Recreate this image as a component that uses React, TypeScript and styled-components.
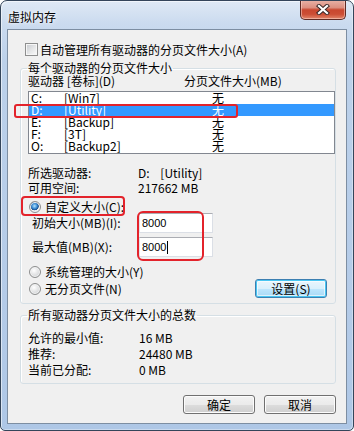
import React from "react";
import styled, { createGlobalStyle } from "styled-components";

const GlobalStyle = createGlobalStyle`
  html, body {
    margin: 0;
    padding: 0;
    background: #fff;
  }
  body {
    font-family: "Noto Sans CJK SC", "Noto Sans", sans-serif;
    font-size: 12px;
    color: #000;
  }
`;

const Window = styled.div`
  position: relative;
  box-sizing: border-box;
  width: 354px;
  height: 431px;
  border: 1px solid #34455a;
  border-radius: 7px 7px 5px 5px;
  padding: 0 6px 6px 6px;
  display: flex;
  flex-direction: column;
  background: linear-gradient(
    180deg,
    #dfe9f5 0px,
    #cbdbef 22px,
    #bcd1ea 60px,
    #b4cbe8 300px,
    #aec7e6 100%
  );
  box-shadow: inset 1px 1px 0 rgba(255, 255, 255, 0.55),
    inset -1px -1px 0 rgba(255, 255, 255, 0.35);
  overflow: hidden;
`;

const TitleBar = styled.div`
  height: 28px;
  display: flex;
  align-items: flex-start;
  justify-content: space-between;
  flex-shrink: 0;
`;

const Title = styled.div`
  margin: 10px 0 0 1px;
  line-height: 12px;
  text-shadow: 0 0 6px rgba(255, 255, 255, 0.9), 0 0 3px rgba(255, 255, 255, 0.9);
`;

const CloseButton = styled.div`
  box-sizing: border-box;
  width: 46px;
  height: 20px;
  margin: -1px 1px 0 0;
  border: 1px solid #5e2a24;
  border-top: none;
  border-radius: 0 0 5px 5px;
  background: linear-gradient(
    180deg,
    #e9b3a8 0%,
    #dc8f80 40%,
    #c9472f 52%,
    #cc4e35 75%,
    #e2866b 100%
  );
  box-shadow: inset 0 0 0 1px rgba(255, 220, 210, 0.5);
  display: flex;
  align-items: center;
  justify-content: center;
`;

const Client = styled.div`
  flex: 1;
  box-sizing: border-box;
  border: 1px solid #7d8ea2;
  background: #f0f0f0;
  padding: 13px 10px 0 12px;
  display: flex;
  flex-direction: column;
`;

const CheckRow = styled.div`
  display: flex;
  align-items: center;
  gap: 2px;
  height: 13px;
  line-height: 13px;
  margin-left: 5px;
`;

const CheckBox = styled.span`
  box-sizing: border-box;
  width: 13px;
  height: 13px;
  border: 1px solid #8e8f8f;
  background: linear-gradient(135deg, #c5c9ce 0%, #e6e7e8 55%, #fbfbfb 100%);
  box-shadow: inset 0 0 0 1px #f6f6f6;
`;

const Group = styled.fieldset`
  box-sizing: border-box;
  width: 316px;
  margin: 0;
  min-width: 0;
  border: 1px solid #d5dfe5;
  border-radius: 3px;
  box-shadow: inset 1px 1px 0 #fff;
  padding: ${(p: { $pad: string }) => p.$pad};
`;

const Legend = styled.legend`
  padding: 0 1px;
  margin-left: -1px;
  line-height: 12px;
`;

const HeaderRow = styled.div`
  display: grid;
  grid-template-columns: 156px 1fr;
  height: 12px;
  line-height: 12px;
`;

const ListBox = styled.div`
  box-sizing: border-box;
  margin-top: 4px;
  width: 307px;
  height: 63px;
  border: 1px solid #828790;
  background: #fff;
  padding-bottom: 1px;
`;

const ListRow = styled.div<{ $selected?: boolean }>`
  display: grid;
  grid-template-columns: 33px 148px 1fr;
  height: 12px;
  line-height: 12px;
  padding-left: 2px;
  background: ${(p) => (p.$selected ? "#3399ff" : "transparent")};
  color: ${(p) => (p.$selected ? "#fff" : "#000")};
`;

const InfoRow = styled.div<{ $top: number; $labelWidth: number }>`
  display: grid;
  grid-template-columns: ${(p) => p.$labelWidth}px 1fr;
  height: 12px;
  line-height: 12px;
  margin-top: ${(p) => p.$top}px;
`;

const RadioRow = styled.div<{ $top: number }>`
  display: flex;
  align-items: center;
  gap: 4px;
  height: 12px;
  line-height: 12px;
  margin-top: ${(p) => p.$top}px;
  padding-left: 1px;
`;

const Radio = styled.span<{ $checked?: boolean }>`
  box-sizing: border-box;
  width: 12px;
  height: 12px;
  border-radius: 50%;
  border: 1px solid #8e8f8f;
  flex-shrink: 0;
  background: ${(p) =>
    p.$checked
      ? "radial-gradient(circle at 45% 40%, #b9e3fb 0px, #3d8fd6 2.5px, #1a4f8f 4px, #e9eaea 4.6px, #fdfdfd 100%)"
      : "radial-gradient(circle at 40% 35%, #ffffff 0%, #e4e5e6 45%, #c6c9cc 100%)"};
  box-shadow: inset 0 0 0 1px #f4f4f4;
`;

const FieldRow = styled.div<{ $top: number }>`
  display: flex;
  align-items: center;
  height: 20px;
  margin-top: ${(p) => p.$top}px;
  padding-left: 4px;
`;

const FieldLabel = styled.span`
  width: 107px;
  line-height: 12px;
`;

const Input = styled.div`
  box-sizing: border-box;
  width: 74px;
  height: 20px;
  border: 1px solid #dbdfe6;
  border-top-color: #abadb3;
  border-left-color: #e2e3ea;
  background: #fff;
  padding-left: 2px;
  display: flex;
  align-items: center;
  font-family: "Liberation Sans", Arial, sans-serif;
  font-size: 11px;
`;

const Caret = styled.span`
  display: inline-block;
  width: 1px;
  height: 13px;
  background: #000;
  margin-left: 1px;
`;

const SetRow = styled.div`
  display: flex;
  align-items: center;
  justify-content: space-between;
  height: 19px;
  margin-top: 1px;
  padding: 0 8px 0 1px;
`;

const RadioLabel = styled.div`
  display: flex;
  align-items: center;
  gap: 4px;
  line-height: 12px;
`;

const Button = styled.div<{ $active?: boolean }>`
  box-sizing: border-box;
  width: 72px;
  height: 19px;
  border: 1px solid ${(p) => (p.$active ? "#3c7fb1" : "#707070")};
  border-radius: 3px;
  background: ${(p) =>
    p.$active
      ? "linear-gradient(180deg, #eaf6fd 0%, #d9f0fc 50%, #bee6fd 51%, #a7d9f5 100%)"
      : "linear-gradient(180deg, #f2f2f2 0%, #ebebeb 50%, #dddddd 51%, #cfcfcf 100%)"};
  box-shadow: ${(p) =>
    p.$active
      ? "inset 0 0 0 1px #48c6f2, inset 0 0 0 2px rgba(255,255,255,0.6)"
      : "inset 0 0 0 1px #fcfcfc"};
  display: flex;
  align-items: center;
  justify-content: center;
  line-height: 12px;
`;

const ButtonBar = styled.div`
  display: flex;
  justify-content: flex-end;
  gap: 9px;
  margin-top: 11px;
`;

const Mark = styled.div<{ $l: number; $t: number; $w: number; $h: number; $r: number }>`
  position: absolute;
  left: ${(p) => p.$l}px;
  top: ${(p) => p.$t}px;
  width: ${(p) => p.$w}px;
  height: ${(p) => p.$h}px;
  box-sizing: border-box;
  border: 2px solid #e3232b;
  border-radius: ${(p) => p.$r}px;
  pointer-events: none;
`;

const drives = [
  { d: "C:", label: "[Win7]" },
  { d: "D:", label: "[Utility]", selected: true },
  { d: "E:", label: "[Backup]" },
  { d: "F:", label: "[3T]" },
  { d: "O:", label: "[Backup2]" },
];

export default function App() {
  return (
    <>
      <GlobalStyle />
      <Window>
        <TitleBar>
          <Title>虚拟内存</Title>
          <CloseButton>
            <svg width="14" height="11" viewBox="0 0 14 11">
              <path d="M3 2 L11 9 M11 2 L3 9" stroke="#3b2a2a" strokeWidth="4.2" strokeLinecap="square" />
              <path d="M3 2 L11 9 M11 2 L3 9" stroke="#fff" strokeWidth="2.2" strokeLinecap="square" />
            </svg>
          </CloseButton>
        </TitleBar>
        <Client>
          <CheckRow>
            <CheckBox />
            <span>自动管理所有驱动器的分页文件大小(A)</span>
          </CheckRow>

          <Group $pad="1px 0 5px 7px" style={{ marginTop: 6 }}>
            <Legend>每个驱动器的分页文件大小</Legend>
            <HeaderRow>
              <span>驱动器 [卷标](D)</span>
              <span>分页文件大小(MB)</span>
            </HeaderRow>
            <ListBox>
              {drives.map((r) => (
                <ListRow key={r.d} $selected={r.selected}>
                  <span>{r.d}</span>
                  <span>{r.label}</span>
                  <span>无</span>
                </ListRow>
              ))}
            </ListBox>
            <InfoRow $top={13} $labelWidth={110}>
              <span>所选驱动器:</span>
              <span>D:&nbsp;&nbsp;&nbsp;&nbsp;[Utility]</span>
            </InfoRow>
            <InfoRow $top={3} $labelWidth={110}>
              <span>可用空间:</span>
              <span>217662 MB</span>
            </InfoRow>
            <RadioRow $top={7}>
              <Radio $checked />
              <span>自定义大小(C):</span>
            </RadioRow>
            <FieldRow $top={0}>
              <FieldLabel>初始大小(MB)(I):</FieldLabel>
              <Input>8000</Input>
            </FieldRow>
            <FieldRow $top={4}>
              <FieldLabel>最大值(MB)(X):</FieldLabel>
              <Input>
                8000
                <Caret />
              </Input>
            </FieldRow>
            <RadioRow $top={9}>
              <Radio />
              <span>系统管理的大小(Y)</span>
            </RadioRow>
            <SetRow>
              <RadioLabel>
                <Radio />
                <span>无分页文件(N)</span>
              </RadioLabel>
              <Button $active>设置(S)</Button>
            </SetRow>
          </Group>

          <Group $pad="11px 0 7px 7px" style={{ marginTop: 5 }}>
            <Legend>所有驱动器分页文件大小的总数</Legend>
            <InfoRow $top={0} $labelWidth={111}>
              <span>允许的最小值:</span>
              <span>16 MB</span>
            </InfoRow>
            <InfoRow $top={4} $labelWidth={111}>
              <span>推荐:</span>
              <span>24480 MB</span>
            </InfoRow>
            <InfoRow $top={4} $labelWidth={111}>
              <span>当前已分配:</span>
              <span>0 MB</span>
            </InfoRow>
          </Group>

          <ButtonBar>
            <Button>确定</Button>
            <Button>取消</Button>
          </ButtonBar>
        </Client>

        <Mark $l={13} $t={103} $w={224} $h={14} $r={3} />
        <Mark $l={20} $t={195} $w={104} $h={20} $r={4} />
        <Mark $l={136} $t={210} $w={67} $h={50} $r={6} />
      </Window>
    </>
  );
}
